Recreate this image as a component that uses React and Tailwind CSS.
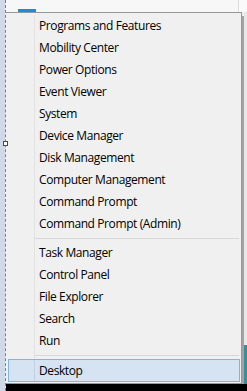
import React from 'react';

const groups = [
    ['Programs and Features', 'Mobility Center', 'Power Options', 'Event Viewer', 'System', 'Device Manager', 'Disk Management', 'Computer Management', 'Command Prompt', 'Command Prompt (Admin)'],
    ['Task Manager', 'Control Panel', 'File Explorer', 'Search', 'Run'],
];

const MenuItem = ({ label }) => (
    <div className="flex h-[22px]">
        <div className="w-[29px] shrink-0 border-r border-[#e2e2e2]" />
        <div className="flex items-center pl-[4px] text-[12px] tracking-[-0.4px] text-black">{label}</div>
    </div>
);

const Separator = () => (
    <div className="flex h-[7px]">
        <div className="w-[29px] shrink-0 border-r border-[#e2e2e2]" />
        <div className="flex flex-1 items-center pr-[2px]">
            <div className="h-px w-full bg-[#d7d7d7]" />
        </div>
    </div>
);

const App = () => {
    return (
        <div
            className="relative flex h-[391px] w-[247px] overflow-hidden bg-[#f0f0f0]"
            style={{ fontFamily: '"Open Sans", "Noto Sans", sans-serif' }}
        >
            {/* designer surface edge */}
            <div className="w-[5px] shrink-0 bg-[#cfd9e7]" />
            <div className="w-px shrink-0 border-l border-dashed border-[#3b8de6]" />

            <div className="flex flex-1 flex-col">
                <div className="flex h-[12px] bg-[#f7f7f7]">
                    <div className="flex-1 pl-[12px] pt-[9px]">
                        <div className="h-[3px] w-[18px] bg-[#1e8cd2]" />
                    </div>
                    <div className="w-px bg-[#dcdcdc]" />
                    <div className="w-[8px] bg-[#fafafa]" />
                </div>

                <div className="flex flex-1">
                    <div className="flex w-[236px] flex-col border-t border-r border-b border-[#979797] bg-[#f0f0f0] pt-[2px]">
                        {groups[0].map((l) => <MenuItem key={l} label={l} />)}
                        <Separator />
                        {groups[1].map((l) => <MenuItem key={l} label={l} />)}
                        <Separator />
                        <div className="ml-[2px] mr-px flex h-[23px] border border-[#84b4e6] bg-[#d5e3f2]">
                            <div className="w-[26px] shrink-0 border-r border-[#c3d2e2]" />
                            <div className="flex items-center pl-[4px] text-[12px] tracking-[-0.4px] text-black">Desktop</div>
                        </div>
                    </div>
                    <div className="flex w-[5px] flex-col">
                        <div className="flex flex-1">
                            <div className="mt-[4px] w-[2px] bg-[#a3a3a3]" />
                            <div className="flex flex-1 flex-col">
                                <div className="flex-1 bg-[#e8e8e8]" />
                                <div className="h-[39px] bg-[#3f8c98]" />
                            </div>
                        </div>
                    </div>
                </div>

                <div className="h-[7px] bg-black" />
            </div>

            {/* resize handle */}
            <div className="absolute left-[3px] top-[141px] h-[5px] w-[5px] border border-[#4a4a4a] bg-white" />
        </div>
    );
};

export default App;
